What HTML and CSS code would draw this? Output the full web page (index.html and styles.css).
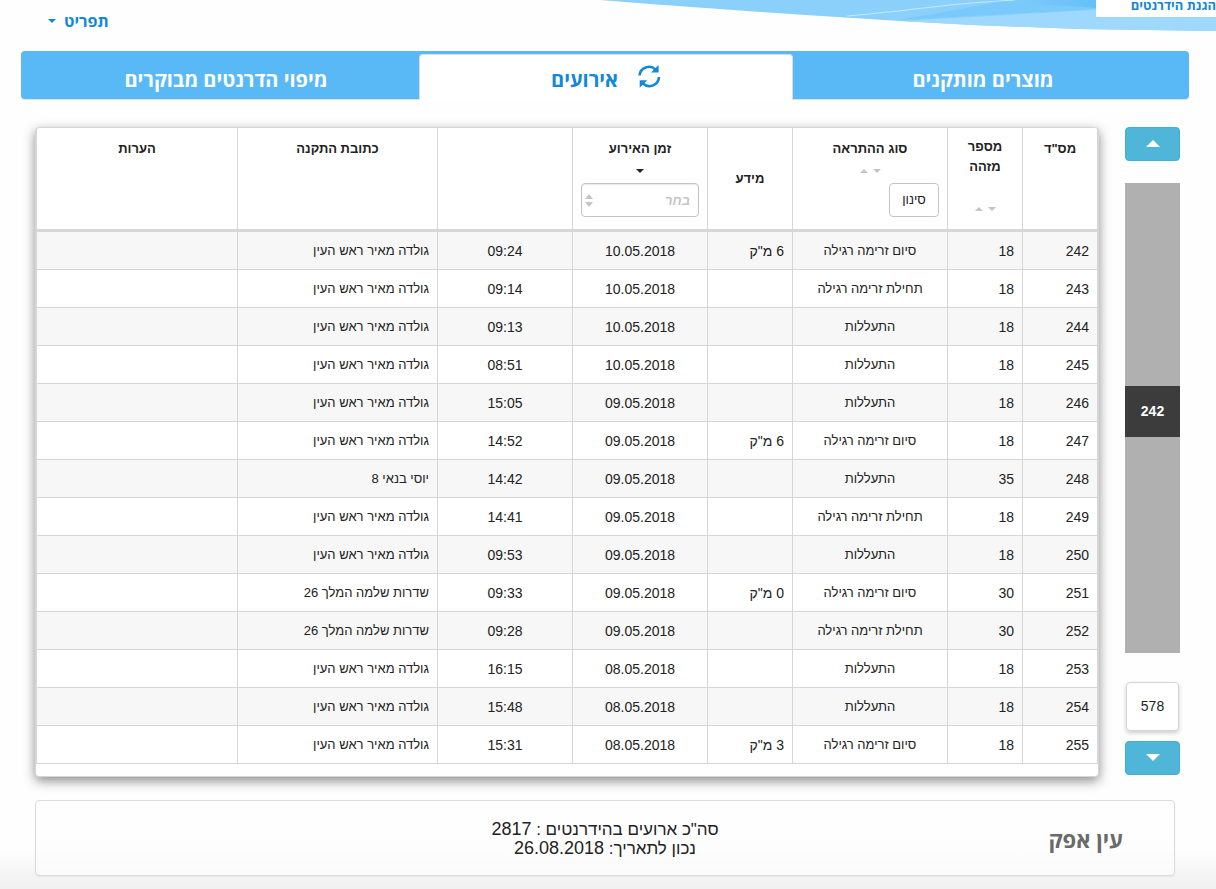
FILE: index.html
```html
<!DOCTYPE html>
<html lang="he" dir="rtl">
<head>
<meta charset="utf-8">
<title>אירועים</title>
<link rel="stylesheet" href="styles.css">
</head>
<body>
<header class="topbar">
  <svg class="swoosh" viewBox="0 0 620 32" preserveAspectRatio="none" aria-hidden="true">
    <defs>
      <linearGradient id="deep" x1="0" x2="1" y1="0" y2="0">
        <stop offset="0" stop-color="#8ad0fb"/>
        <stop offset=".5" stop-color="#66c0f9"/>
        <stop offset="1" stop-color="#5cbbf8"/>
      </linearGradient>
    </defs>
    <path d="M4 0L54 4L194 14L304 21L377 25L483 29L620 31V0Z" fill="#8ad0fb"/>
    <path d="M304 21L500 10L620 17V31L483 29L377 25Z" fill="#9fd8fd"/>
    <path d="M304 20L414 0H620V17L500 9Z" fill="#7ac9fb"/>
    <path d="M374 0H620V14L500 8Z" fill="url(#deep)"/>
    <path d="M251 16C280 14 310 10 354 5Q384 2 418 0" fill="none" stroke="#c5e8fe"/>
  </svg>
  <div class="brand">הגנת הידרנטים</div>
  <button class="menu" type="button">תפריט <span class="caret down"></span></button>
</header>

<nav class="tabs">
  <a class="tab first" href="#products">מוצרים מותקנים</a>
  <a class="tab active" href="#events" aria-current="page">
    <svg class="refresh" viewBox="0 0 23 23" aria-hidden="true">
      <path d="M1.500 10.500A9.500 9.500 0 0 1 17.500 4.500M21 12A9.500 9.500 0 0 1 5 18.500" fill="none" stroke="currentColor" stroke-width="2.600"/>
      <path d="M20.600 0V7.600H13ZM1.700 15.300H9.300L1.700 22.800Z" fill="currentColor"/>
    </svg>
    אירועים
  </a>
  <a class="tab last" href="#map">מיפוי הדרנטים מבוקרים</a>
</nav>

<main class="content">
  <aside class="pager">
    <button class="step" type="button" aria-label="למעלה"><span class="caret up big"></span></button>
    <div class="track">
      <input class="range" id="row" type="range" min="0" max="500" value="242" aria-label="שורה">
      <output class="position" for="row">242</output>
    </div>
    <div class="total">578</div>
    <button class="step" type="button" aria-label="למטה"><span class="caret down big"></span></button>
  </aside>
  <section class="card">
    <table class="events">
      <colgroup><col class="w-no"><col class="w-id"><col class="w-type"><col class="w-info"><col class="w-time"><col class="w-time"><col class="w-wide"><col></colgroup>
      <thead>
        <tr>
          <th scope="col">מס"ד</th>
          <th scope="col" class="tight"><div class="head">מספר מזהה <span class="sort low"><i class="caret down"></i><i class="caret up"></i></span></div></th>
          <th scope="col"><div class="head">סוג ההתראה <span class="sort"><i class="caret down"></i><i class="caret up"></i></span><button class="filter" type="button">סינון</button></div></th>
          <th scope="col" class="middle">מידע</th>
          <th scope="col"><div class="head">זמן האירוע <span class="sort on"><i class="caret down"></i></span>
            <span class="pick"><input type="text" placeholder="בחר" aria-label="זמן האירוע"><span class="spin"><i class="caret up"></i><i class="caret down"></i></span></span></div></th>
          <th></th>
          <th scope="col">כתובת התקנה</th>
          <th scope="col">הערות</th>
        </tr>
      </thead>
      <tbody>
        <tr><td>242</td><td>18</td><td>סיום זרימה רגילה</td><td>6 מ"ק</td><td>10.05.2018</td><td>09:24</td><td>גולדה מאיר ראש העין</td><td></td></tr>
        <tr><td>243</td><td>18</td><td>תחילת זרימה רגילה</td><td></td><td>10.05.2018</td><td>09:14</td><td>גולדה מאיר ראש העין</td><td></td></tr>
        <tr><td>244</td><td>18</td><td>התעללות</td><td></td><td>10.05.2018</td><td>09:13</td><td>גולדה מאיר ראש העין</td><td></td></tr>
        <tr><td>245</td><td>18</td><td>התעללות</td><td></td><td>10.05.2018</td><td>08:51</td><td>גולדה מאיר ראש העין</td><td></td></tr>
        <tr><td>246</td><td>18</td><td>התעללות</td><td></td><td>09.05.2018</td><td>15:05</td><td>גולדה מאיר ראש העין</td><td></td></tr>
        <tr><td>247</td><td>18</td><td>סיום זרימה רגילה</td><td>6 מ"ק</td><td>09.05.2018</td><td>14:52</td><td>גולדה מאיר ראש העין</td><td></td></tr>
        <tr><td>248</td><td>35</td><td>התעללות</td><td></td><td>09.05.2018</td><td>14:42</td><td>יוסי בנאי 8</td><td></td></tr>
        <tr><td>249</td><td>18</td><td>תחילת זרימה רגילה</td><td></td><td>09.05.2018</td><td>14:41</td><td>גולדה מאיר ראש העין</td><td></td></tr>
        <tr><td>250</td><td>18</td><td>התעללות</td><td></td><td>09.05.2018</td><td>09:53</td><td>גולדה מאיר ראש העין</td><td></td></tr>
        <tr><td>251</td><td>30</td><td>סיום זרימה רגילה</td><td>0 מ"ק</td><td>09.05.2018</td><td>09:33</td><td>שדרות שלמה המלך 26</td><td></td></tr>
        <tr><td>252</td><td>30</td><td>תחילת זרימה רגילה</td><td></td><td>09.05.2018</td><td>09:28</td><td>שדרות שלמה המלך 26</td><td></td></tr>
        <tr><td>253</td><td>18</td><td>התעללות</td><td></td><td>08.05.2018</td><td>16:15</td><td>גולדה מאיר ראש העין</td><td></td></tr>
        <tr><td>254</td><td>18</td><td>התעללות</td><td></td><td>08.05.2018</td><td>15:48</td><td>גולדה מאיר ראש העין</td><td></td></tr>
        <tr><td>255</td><td>18</td><td>סיום זרימה רגילה</td><td>3 מ"ק</td><td>08.05.2018</td><td>15:31</td><td>גולדה מאיר ראש העין</td><td></td></tr>
      </tbody>
    </table>
  </section>
</main>

<footer class="summary">
  <h2 class="site">עין אפק</h2>
  <p class="totals">סה"כ ארועים בהידרנטים : <span class="num">2817</span><br>נכון לתאריך: <span class="num">26.08.2018</span></p>
</footer>
</body>
</html>
```
FILE: styles.css
```css
* { box-sizing: border-box; }

html { background: #fff; }

body {
  margin: 0;
  min-height: 100vh;
  padding-bottom: 12px;
  background: linear-gradient(to top, #f0f0f0, #fefefe 40px);
  color: #222;
  font: 14px/20px "Liberation Sans", Arial, sans-serif;
}

button, input { font: inherit; color: inherit; }

/* top bar */
.topbar {
  position: relative;
  display: flex;
  justify-content: flex-end;
  height: 51px;
  padding: 9px 0 0 48px;
}

.swoosh {
  position: absolute;
  top: 0;
  right: 0;
  width: 51%;
  height: 32px;
}

.brand {
  position: absolute;
  top: 0;
  right: 0;
  width: 120px;
  height: 17px;
  background: #fff;
  color: #1488d8;
  font: 700 13px/10px "Open Sans", sans-serif;
  white-space: nowrap;
}

.menu {
  display: flex;
  align-items: center;
  gap: 8px;
  height: 24px;
  padding: 0;
  border: 0;
  background: none;
  color: #1488d8;
  font: 700 16px/24px "Open Sans", sans-serif;
}

.caret {
  display: inline-block;
  border: 4px solid transparent;
}
.caret.down { border-top-color: currentColor; border-bottom: 0; }
.caret.up { border-bottom-color: currentColor; border-top: 0; }
.caret.big { border-right-width: 7px; border-left-width: 7px; }
.caret.big.down { border-top-width: 7px; }
.caret.big.up { border-bottom-width: 7px; }

/* tabs */
.tabs {
  display: grid;
  grid-template-columns: 396fr 374fr 398fr;
  height: 48px;
  margin: 0 27px 0 21px;
  border-radius: 4px;
  background: #59b9f7;
  box-shadow: 0 1px #dfe3e6;
}

.tab {
  display: flex;
  align-items: center;
  justify-content: center;
  gap: 20px;
  padding-top: 10px;
  color: #fff;
  font: 700 20px/28px "Open Sans", sans-serif;
  text-decoration: none;
}
.tab.first { padding-right: 16px; }
.tab.last { padding-left: 12px; }
.tab.active {
  margin: 3px 0 -1px;
  padding-top: 4px;
  border: solid #ddd;
  border-width: 1px 1px 0;
  border-radius: 4px 4px 0 0;
  background: #fff;
  color: #1488d8;
}

.refresh { width: 23px; height: 23px; margin-bottom: 6px; }

/* table and row scroller */
.content {
  display: flex;
  gap: 26px;
  padding: 28px 36px 0 35px;
}

.card {
  flex: 1;
  min-width: 0;
  padding-bottom: 12px;
  border: 1px solid #d6d6d6;
  border-radius: 4px;
  background: #fff;
  box-shadow: 0 4px 12px rgba(0, 0, 0, .45);
}

.events {
  width: 100%;
  table-layout: fixed;
  border-collapse: separate;
  border-spacing: 0;
  border-right: 1px solid #d6d6d6;
}

.w-no, .w-id { width: 75px; }
.w-type { width: 155px; }
.w-info { width: 85px; }
.w-time { width: 135px; }
.w-wide { width: 200px; }

.events th, .events td {
  border: solid #d6d6d6;
  border-width: 0 0 1px 1px;
}

.events th {
  height: 104px;
  padding: 11px 8px 0;
  border-bottom-width: 3px;
  font-size: 13px;
  font-weight: 700;
  text-align: center;
  vertical-align: top;
}
.events th.tight { padding-top: 9px; }
.events th.middle { padding-top: 0; vertical-align: middle; }

.events td {
  height: 38px;
  padding: 9px 8px 8px;
  text-align: center;
}
.events td:nth-child(-n+2),
.events td:nth-child(4),
.events td:nth-child(7) { text-align: right; }
.events td:nth-child(3),
.events td:nth-child(7) { font-size: 13px; }
.events tbody tr:nth-child(odd) { background: #f7f7f7; }

.head {
  display: flex;
  flex-direction: column;
  align-items: center;
}

.sort {
  display: flex;
  gap: 5px;
  padding: 10px 0;
  color: #c4c4c4;
}
.sort.low { padding-top: 30px; }
.sort.on { color: #222; }

.filter {
  align-self: flex-start;
  width: 50px;
  height: 34px;
  padding: 0;
  border: 1px solid #c4c4c4;
  border-radius: 4px;
  background: #fff;
  font-weight: 400;
}

.pick {
  position: relative;
  width: 100%;
}
.pick input {
  display: block;
  width: 100%;
  height: 34px;
  padding: 0 8px;
  border: 1px solid #c4c4c4;
  border-radius: 4px;
  background: #fff;
  box-shadow: inset 0 1px 1px rgba(0, 0, 0, .08);
}
.pick input::placeholder { color: #c4c4c4; font-style: italic; font-weight: 700; opacity: 1; }
.spin {
  position: absolute;
  top: 11px;
  left: 4px;
  display: grid;
  gap: 3px;
  color: #c4c4c4;
}
.spin .up { border-bottom-width: 5px; }
.spin .down { border-top-width: 5px; }

.pager {
  display: flex;
  flex-direction: column;
  width: 55px;
}

.step {
  display: flex;
  align-items: center;
  justify-content: center;
  height: 34px;
  padding: 0 0 2px;
  border: 1px solid #43aed3;
  border-radius: 4px;
  background: #50b6d9;
  color: #fff;
}

.track {
  position: relative;
  height: 470px;
  margin: 22px 0 29px;
}
.range {
  display: block;
  width: 100%;
  height: 100%;
  margin: 0;
  appearance: none;
  background: #b0b0b0;
  direction: ltr;
  writing-mode: vertical-lr;
}
.range::-webkit-slider-thumb {
  appearance: none;
  width: 55px;
  height: 51px;
  background: #3c3c3c;
}
.position {
  position: absolute;
  top: 203px;
  right: 0;
  left: 0;
  color: #fff;
  font-weight: 700;
  line-height: 51px;
  text-align: center;
  pointer-events: none;
}

.total {
  margin: 0 1px 10px;
  border: 1px solid #d6d6d6;
  border-radius: 4px;
  background: #fff;
  box-shadow: 0 2px 4px rgba(0, 0, 0, .2);
  line-height: 47px;
  text-align: center;
}

/* summary */
.summary {
  display: grid;
  grid-template-columns: 1fr auto 1fr;
  align-items: center;
  height: 76px;
  margin: 23px 41px 0 35px;
  padding: 2px 51px 0;
  border: 1px solid #dadada;
  border-radius: 4px;
  background: linear-gradient(#fefefe 50%, #fafafa);
  box-shadow: 0 1px 2px rgba(0, 0, 0, .06);
}
.site {
  margin: 0;
  color: #6a6a6a;
  font: 700 22px/30px "Open Sans", sans-serif;
}
.totals {
  margin: 0;
  font-size: 17px;
  line-height: 19px;
  text-align: center;
}
.num { font-size: 18px; }
```
